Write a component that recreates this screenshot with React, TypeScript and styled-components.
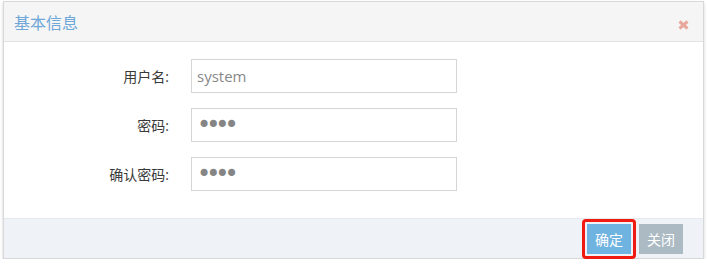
import React from "react";
import styled, { createGlobalStyle } from "styled-components";

const Global = createGlobalStyle`
  html, body { margin: 0; padding: 0; background: #fff; }
  body { font-family: "Open Sans", "Noto Sans CJK SC", sans-serif; font-size: 13px; color: #393939; }
  * { box-sizing: border-box; }
`;

const Page = styled.div`
  padding: 1px 3px 0 3px;
  width: 707px;
`;

const Dialog = styled.div`
  width: 701px;
  border: 1px solid #d8d8d8;
  background: #fff;
  box-shadow: 0 2px 3px rgba(0, 0, 0, 0.18);
`;

const Header = styled.div`
  height: 40px;
  background: #f5f5f5;
  border-bottom: 1px solid #e3e3e3;
  display: flex;
  align-items: center;
  justify-content: space-between;
  padding: 0 14px 0 10px;
`;

const Title = styled.h4`
  margin: 0;
  font-weight: normal;
  font-size: 16px;
  color: #6fa7d8;
  font-family: "Open Sans", "Noto Sans CJK SC", sans-serif;
`;

const Close = styled.button`
  border: none;
  background: none;
  padding: 0;
  margin-top: 6px;
  display: flex;
  color: #e8a89e;
`;

const Body = styled.div`
  padding: 17px 0 27px 0;
  display: flex;
  flex-direction: column;
  gap: 15px;
`;

const Row = styled.div`
  display: grid;
  grid-template-columns: 165px 266px;
  column-gap: 22px;
  align-items: center;
`;

const Label = styled.label`
  text-align: right;
  font-size: 14px;
  color: #393939;
`;

const Input = styled.input`
  height: 34px;
  width: 266px;
  border: 1px solid #d5d5d5;
  padding: 0 5px;
  font-size: 15px;
  font-family: "Open Sans", "Noto Sans CJK SC", sans-serif;
  color: #888;
  outline: none;
  &[type="password"] {
    font-family: "DejaVu Sans", sans-serif;
    font-size: 24px;
    letter-spacing: -5px;
    color: #858585;
  }
`;

const Footer = styled.div`
  height: 40px;
  background: #eff3f8;
  border-top: 1px solid #e4e9ee;
  display: flex;
  align-items: center;
  justify-content: flex-end;
  gap: 3px;
  padding: 0 20px 0 0;
`;

const Btn = styled.button<{ $primary?: boolean }>`
  height: 30px;
  padding: 0 8px;
  border: none;
  color: #fff;
  font-size: 14px;
  font-family: "Open Sans", "Noto Sans CJK SC", sans-serif;
  background: ${(p) => (p.$primary ? "#6fb3e0" : "#abbac3")};
  border-radius: 0;
`;

const Highlight = styled.span`
  display: inline-flex;
  border: 3px solid #f01a10;
  border-radius: 4px;
  padding: 2px;
`;

export default function App() {
  return (
    <>
      <Global />
      <Page>
        <Dialog>
          <Header>
            <Title>基本信息</Title>
            <Close aria-label="关闭">
              <svg width="11" height="10" viewBox="0 0 11 10">
                <path d="M1.5 1.5 L9.5 8.5 M9.5 1.5 L1.5 8.5" stroke="currentColor" strokeWidth="3" strokeLinecap="butt" />
              </svg>
            </Close>
          </Header>
          <Body>
            <Row>
              <Label>用户名:</Label>
              <Input type="text" defaultValue="system" />
            </Row>
            <Row>
              <Label>密码:</Label>
              <Input type="password" defaultValue="1234" />
            </Row>
            <Row>
              <Label>确认密码:</Label>
              <Input type="password" defaultValue="1234" />
            </Row>
          </Body>
          <Footer>
            <Highlight>
              <Btn $primary>确定</Btn>
            </Highlight>
            <Btn>关闭</Btn>
          </Footer>
        </Dialog>
      </Page>
    </>
  );
}
